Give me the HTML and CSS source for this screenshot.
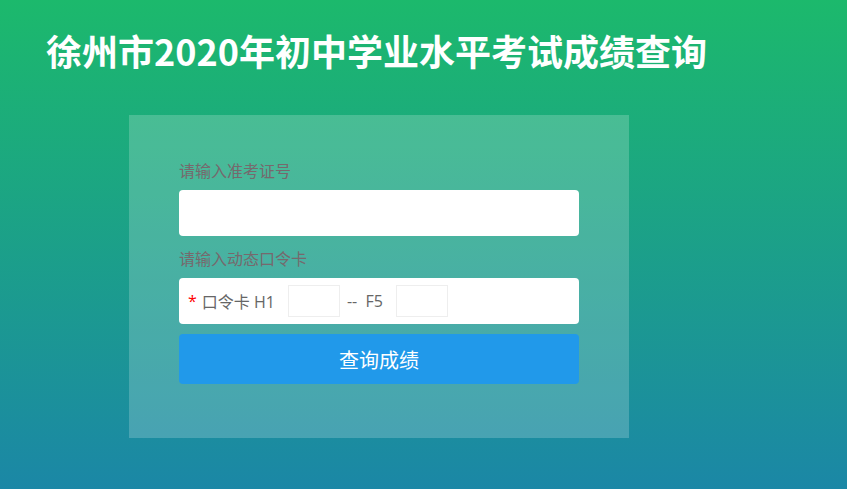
FILE: index.html
```html
<!DOCTYPE html>
<html lang="zh-CN">
<head>
    <meta charset="UTF-8">
    <meta name="viewport" content="width=device-width, initial-scale=1.0">
    <title>徐州市2020年初中学业水平考试成绩查询</title>
    <link rel="stylesheet" href="styles.css">
</head>
<body>
    <!-- 标题 -->
    <h1 class="page-title">徐州市2020年初中学业水平考试成绩查询</h1>

    <!-- 查询表单 -->
    <div class="query-box">
        <form class="query-form" onsubmit="return false;">
            <label class="field-label" for="zkzh">请输入准考证号</label>
            <input class="field-input" type="text" id="zkzh" name="zkzh">

            <label class="field-label">请输入动态口令卡</label>
            <div class="card-row">
                <span class="required">*</span>
                <span class="card-text">口令卡 H1</span>
                <input class="card-input" type="text" maxlength="4">
                <span class="card-sep">-- &nbsp;F5</span>
                <input class="card-input" type="text" maxlength="4">
            </div>

            <button class="submit-btn" type="submit">查询成绩</button>
        </form>
    </div>
</body>
</html>
```

FILE: styles.css
```css
html, body {
    height: 100%;
}

body {
    margin: 0;
    min-height: 489px;
    background: linear-gradient(to bottom, #1cb96c, #1b87a6);
    font-family: "Noto Sans CJK SC", "Noto Sans", sans-serif;
}

/* 标题 */
.page-title {
    margin: 0;
    padding: 25px 0 0 46px;
    font-size: 36px;
    line-height: 50px;
    font-weight: bold;
    color: #fff;
}

/* 查询框 */
.query-box {
    width: 500px;
    margin: 40px 0 0 129px;
    padding: 43px 50px 54px;
    box-sizing: border-box;
    background-color: rgba(255, 255, 255, 0.2);
}

.query-form {
    display: flex;
    flex-direction: column;
}

.field-label {
    font-size: 16px;
    line-height: 24px;
    color: #76696d;
    margin-bottom: 8px;
}

.field-input {
    height: 46px;
    border: none;
    border-radius: 4px;
    background: #fff;
    padding: 0 10px;
    font-size: 16px;
    outline: none;
    margin-bottom: 10px;
    box-sizing: border-box;
}

.card-row {
    display: flex;
    align-items: center;
    height: 46px;
    background: #fff;
    border-radius: 4px;
    padding: 0 0 0 9px;
    font-family: "Open Sans", "Noto Sans CJK SC", sans-serif;
    font-size: 16px;
    color: #666;
}

.required {
    color: #f00;
    margin-right: 5px;
}

.card-text {
    margin-right: 13px;
}

.card-input {
    width: 52px;
    height: 32px;
    box-sizing: border-box;
    border: 1px solid #eee;
    outline: none;
    padding: 0 4px;
    font-size: 14px;
}

.card-sep {
    margin: 0 13px 0 7px;
}

.submit-btn {
    margin-top: 10px;
    height: 50px;
    border: none;
    border-radius: 4px;
    background-color: #2199ea;
    color: #fff;
    font-family: inherit;
    font-size: 20px;
    cursor: pointer;
}
```
